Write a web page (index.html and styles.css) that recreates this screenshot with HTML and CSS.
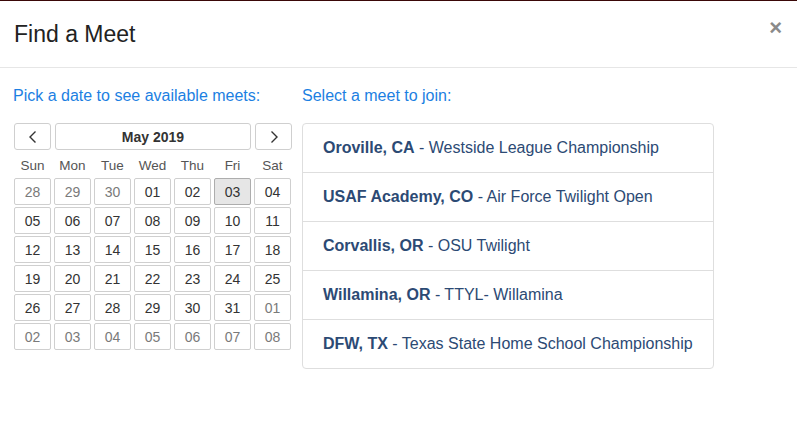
FILE: index.html
```html
<!DOCTYPE html>
<html>
<head>
<meta charset="utf-8">
<link rel="stylesheet" href="styles.css">
</head>
<body>
<div class="modal">
  <div class="modal-header">
    <h4 class="modal-title">Find a Meet</h4>
    <button class="close" type="button">×</button>
  </div>
  <div class="modal-body">
    <div class="col-left">
      <div class="label">Pick a date to see available meets:</div>
      <div class="calendar">
        <div class="cal-nav">
          <button class="nav-btn"><svg width="10" height="14" viewBox="0 0 10 14"><path d="M7.5 1.5 L2 7 L7.5 12.5" fill="none" stroke="#333" stroke-width="1.4"/></svg></button>
          <button class="nav-btn month">May 2019</button>
          <button class="nav-btn"><svg width="10" height="14" viewBox="0 0 10 14"><path d="M2.5 1.5 L8 7 L2.5 12.5" fill="none" stroke="#333" stroke-width="1.4"/></svg></button>
        </div>
        <div class="weekdays">
          <span>Sun</span><span>Mon</span><span>Tue</span><span>Wed</span><span>Thu</span><span>Fri</span><span>Sat</span>
        </div>
        <div class="days">
          <button class="day muted">28</button><button class="day muted">29</button><button class="day muted">30</button><button class="day">01</button><button class="day">02</button><button class="day active">03</button><button class="day">04</button>
          <button class="day">05</button><button class="day">06</button><button class="day">07</button><button class="day">08</button><button class="day">09</button><button class="day">10</button><button class="day">11</button>
          <button class="day">12</button><button class="day">13</button><button class="day">14</button><button class="day">15</button><button class="day">16</button><button class="day">17</button><button class="day">18</button>
          <button class="day">19</button><button class="day">20</button><button class="day">21</button><button class="day">22</button><button class="day">23</button><button class="day">24</button><button class="day">25</button>
          <button class="day">26</button><button class="day">27</button><button class="day">28</button><button class="day">29</button><button class="day">30</button><button class="day">31</button><button class="day muted">01</button>
          <button class="day muted">02</button><button class="day muted">03</button><button class="day muted">04</button><button class="day muted">05</button><button class="day muted">06</button><button class="day muted">07</button><button class="day muted">08</button>
        </div>
      </div>
    </div>
    <div class="col-right">
      <div class="label">Select a meet to join:</div>
      <div class="list">
        <a class="item"><b>Oroville, CA</b> - Westside League Championship</a>
        <a class="item"><b>USAF Academy, CO</b> - Air Force Twilight Open</a>
        <a class="item"><b>Corvallis, OR</b> - OSU Twilight</a>
        <a class="item"><b>Willamina, OR</b> - TTYL- Willamina</a>
        <a class="item"><b>DFW, TX</b> - Texas State Home School Championship</a>
      </div>
    </div>
  </div>
</div>
</body>
</html>
```
FILE: styles.css
```css
* { box-sizing: border-box; }
html, body { margin: 0; padding: 0; background: #fff; }
body {
  font-family: "Liberation Sans", Arial, Helvetica, sans-serif;
  color: #212529;
  width: 797px;
  height: 431px;
  overflow: hidden;
}
.modal {
  border-top: 1px solid #3a0808;
}
.modal-header {
  display: flex;
  justify-content: space-between;
  align-items: flex-start;
  padding: 15px 14px 15px 14px;
  height: 67px;
  border-bottom: 1px solid #e6e6e6;
}
.modal-title {
  margin: 0;
  font-size: 23px;
  font-weight: normal;
  line-height: 37px;
  color: #222;
}
.close {
  border: 0;
  background: none;
  padding: 0;
  margin: 2px 1px 0 0;
  font-family: "Liberation Sans", Arial, sans-serif;
  font-size: 22px;
  font-weight: bold;
  line-height: 20px;
  color: #8a8a8a;
}
.modal-body {
  display: flex;
  gap: 10px;
  padding: 18px 13px 0 13px;
}
.label {
  font-size: 16px;
  line-height: 20px;
  color: #1c7fe2;
  margin-bottom: 17px;
}
.col-left { width: 279px; }
.col-right { width: 412px; }
.calendar {
  margin: 1px 0 0 1px;
  width: 278px;
}
.cal-nav {
  display: grid;
  grid-template-columns: 37px 1fr 37px;
  gap: 4px;
  height: 27px;
}
.nav-btn {
  border: 1px solid #cfcfcf;
  border-radius: 3px;
  background: #fff;
  padding: 0;
  display: flex;
  align-items: center;
  justify-content: center;
  font-family: "Liberation Sans", Arial, sans-serif;
  color: #333;
}
.nav-btn.month {
  font-size: 14px;
  font-weight: bold;
}
.weekdays {
  display: grid;
  grid-template-columns: repeat(7, 37px);
  column-gap: 3px;
  padding-top: 6px;
  height: 28px;
  font-size: 13.5px;
  line-height: 20px;
  text-align: center;
  color: #555;
}
.days {
  display: grid;
  grid-template-columns: repeat(7, 37px);
  grid-auto-rows: 27px;
  column-gap: 3px;
  row-gap: 2px;
}
.day {
  border: 1px solid #cfcfcf;
  border-radius: 2px;
  background: #fff;
  padding: 0;
  font-family: "Liberation Sans", Arial, sans-serif;
  font-size: 14px;
  color: #333;
}
.day.muted { color: #7a7a7a; }
.day.active {
  background: #e6e6e6;
  border-color: #adadad;
}
.list {
  margin-top: 0;
  border: 1px solid #dedede;
  border-radius: 4px;
  width: 412px;
}
.item {
  display: block;
  height: 49px;
  line-height: 48px;
  padding: 0 20px;
  border-top: 1px solid #dedede;
  font-size: 16px;
  color: #2c4a74;
  white-space: nowrap;
}
.item:first-child { border-top: 0; height: 48px; }
.item b { font-weight: bold; }
```
